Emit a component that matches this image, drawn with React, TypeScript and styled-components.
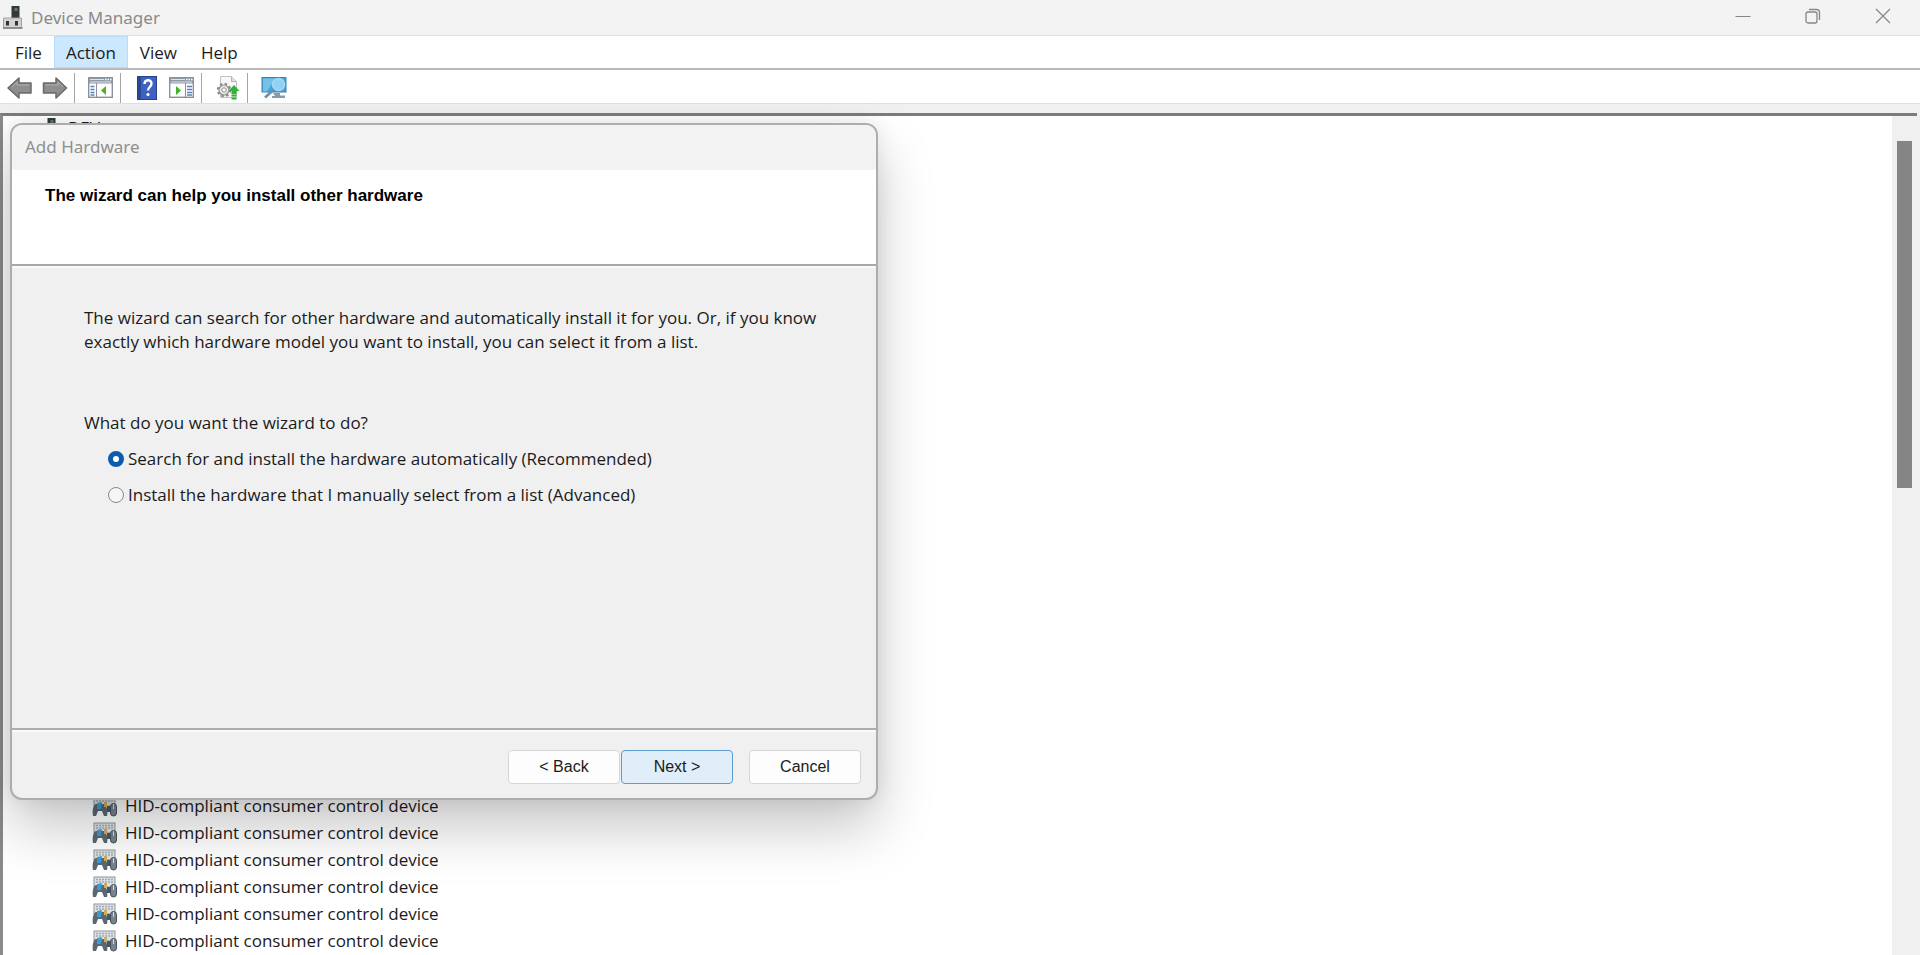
import React, { useState } from 'react';
import styled, { createGlobalStyle } from 'styled-components';

const ui = `'Open Sans', 'Segoe UI', sans-serif`;
const caption = `'Noto Sans', 'Segoe UI', sans-serif`;
const classic = `'Liberation Sans', Arial, sans-serif`;

const GlobalStyle = createGlobalStyle`
  *, *::before, *::after { box-sizing: border-box; }
  html, body { margin: 0; height: 100%; }
  body { background: #f3f3f3; color: #1b1b1b; font-family: ${ui}; overflow: hidden; }
  button, input { font: inherit; color: inherit; }
  svg { display: block; flex: none; }
`;

const Window = styled.div`
  display: flex;
  flex-direction: column;
  height: 100vh;
  overflow: hidden;
`;

const TitleBar = styled.header`
  display: flex;
  align-items: center;
  height: 35px;
  flex: none;
  padding: 0 2px;
  background: #f3f3f3;
`;

const WindowTitle = styled.h1`
  flex: 1;
  margin: 0 0 0 7px;
  font-family: ${caption};
  font-size: 17px;
  line-height: 24px;
  font-weight: 400;
  color: #8a8a8a;
`;

const CaptionButton = styled.button`
  display: grid;
  place-items: center;
  align-self: flex-start;
  width: 70px;
  height: 32px;
  padding: 0;
  border: 0;
  background: transparent;
  color: #868686;
`;

const MenuBar = styled.nav`
  display: flex;
  flex: none;
  height: 35px;
  padding-left: 3px;
  border-top: 1px solid #dedede;
  border-bottom: 2px solid #b9b9b9;
  background: #fff;
`;

const MenuButton = styled.button<{ $open?: boolean }>`
  height: 32px;
  padding: 2px 11px 0;
  border: 1px solid ${p => (p.$open ? '#b8dcfa' : 'transparent')};
  background: ${p => (p.$open ? '#cce8ff' : 'transparent')};
  font-size: 17px;
  line-height: 28px;
`;

const ToolBar = styled.div`
  display: flex;
  align-items: center;
  flex: none;
  height: 33px;
  padding: 2px 0 0 2px;
  background: #fff;
`;

const ToolButton = styled.button`
  display: grid;
  place-items: center;
  width: 35px;
  height: 30px;
  padding: 0;
  border: 0;
  background: transparent;
`;

const Separator = styled.span`
  width: 1px;
  height: 30px;
  margin: 0 8px 0 2px;
  background: #a5a5a5;
`;

const Frame = styled.div`
  display: flex;
  flex: 1;
  min-height: 0;
  padding: 9px 3px 0 0;
  border-top: 1px solid #e0e0e0;
  background: #f0f0f0;
`;

const Pane = styled.main`
  position: relative;
  display: flex;
  flex: 1;
  border-top: 3px solid #7c7c7c;
  border-left: 3px solid #8a8a8a;
  background: #fff;
`;

const Tree = styled.ul`
  flex: 1;
  margin: 0;
  padding: 1px 0 0 35px;
  list-style: none;
`;

const DeviceList = styled.ul`
  margin: 648px 0 0;
  padding: 0 0 0 54px;
  list-style: none;
`;

const TreeRow = styled.div<{ $root?: boolean }>`
  display: flex;
  align-items: ${p => (p.$root ? 'flex-start' : 'center')};
  gap: 8px;
  height: 27px;
  font-size: 17px;
  line-height: ${p => (p.$root ? '22px' : '27px')};
  white-space: nowrap;
`;

const ScrollTrack = styled.div`
  width: 25px;
  padding: 25px 5px 0;
  background: #f0f0f0;
`;

const ScrollThumb = styled.div`
  height: 347px;
  background: #858585;
`;

const Dialog = styled.section`
  position: absolute;
  top: 7px;
  left: 7px;
  display: flex;
  flex-direction: column;
  width: 868px;
  height: 677px;
  overflow: hidden;
  border: 2px solid #adadad;
  border-radius: 12px;
  background: #f0f0f0;
  box-shadow: 0 28px 56px rgba(0, 0, 0, 0.22), 0 0 20px rgba(0, 0, 0, 0.08);
`;

const DialogTitle = styled.h2`
  flex: none;
  height: 45px;
  margin: 0;
  padding: 0 13px;
  background: #f3f3f3;
  font-family: ${caption};
  font-size: 17px;
  line-height: 43px;
  font-weight: 400;
  color: #8f8f8f;
`;

const DialogHeader = styled.div`
  flex: none;
  height: 96px;
  padding: 15px 33px;
  border-bottom: 2px solid #a8a8a8;
  background: #fff;
`;

const Heading = styled.h3`
  margin: 0;
  font-family: ${classic};
  font-size: 17px;
  line-height: 22px;
  font-weight: 700;
  color: #000;
`;

const DialogBody = styled.form`
  flex: 1;
  padding: 38px 40px 0 72px;
  border-top: 2px solid #fafafa;
  font-size: 17px;
  line-height: 24px;
`;

const Intro = styled.p`
  margin: 0 0 57px;
`;

const Choices = styled.fieldset`
  margin: 0;
  padding: 0;
  border: 0;
`;

const Question = styled.legend`
  padding: 0;
`;

const Choice = styled.label`
  display: flex;
  align-items: center;
  gap: 4px;
  margin: 12px 0 0 24px;
`;

const Radio = styled.input`
  appearance: none;
  width: 16px;
  height: 16px;
  margin: 0;
  border: 1px solid #888;
  border-radius: 50%;
  background: #f6f6f6;
  &:checked {
    border: 5px solid #0b5cad;
    background: #fff;
  }
`;

const DialogFooter = styled.footer`
  display: flex;
  flex: none;
  justify-content: flex-end;
  height: 70px;
  padding: 20px 15px 0;
  border-top: 2px solid #adadad;
  box-shadow: inset 0 2px 0 #fafafa;
`;

const ActionButton = styled.button<{ $primary?: boolean; $apart?: boolean }>`
  width: 112px;
  height: 34px;
  margin-left: ${p => (p.$apart ? '16px' : '1px')};
  border: 1px solid ${p => (p.$primary ? '#5b9bd0' : '#d6d6d6')};
  border-radius: 4px;
  background: ${p => (p.$primary ? '#e0eef9' : '#fdfdfd')};
  font-family: ${classic};
  font-size: 16px;
`;

const ComputerIcon = () => (
  <svg width="22" height="25" viewBox="0 0 22 25">
    <rect x="9.500" y="1" width="8" height="13" fill="#343a3a" />
    <rect x="12.500" y="3" width="3" height="3" fill="#5d7a6c" />
    <path d="M1.500 13h18v10h-18z" fill="#d2d2d2" stroke="#a2a2a2" />
    <path d="M1 22h19.500v2H1z" fill="#8c8c8c" />
    <rect x="4" y="16" width="3" height="4.500" fill="#333" />
    <rect x="13" y="16" width="3" height="4.500" fill="#333" />
  </svg>
);

const ArrowIcon = ({ flip }: { flip?: boolean }) => (
  <svg width="26" height="24" viewBox="0 0 26 24">
    <path
      d={flip ? 'M24.500 12 14 2v5H1.500v10H14v5z' : 'M1 12 12 2v5h12v10H12v5z'}
      fill="#8e8e8e" stroke="#686868" strokeWidth="1.500" strokeLinejoin="round"
    />
    <path d={flip ? 'M3.500 9H16V6l5 5' : 'M22.500 9H10V6l-5 5'} fill="none" stroke="#b0b0b0" />
  </svg>
);

const ConsoleIcon = ({ flip }: { flip?: boolean }) => (
  <svg width="25" height="21" viewBox="0 0 25 21">
    <rect x=".7" y=".7" width="23.600" height="19.600" fill="#fff" stroke="#8b929c" strokeWidth="1.400" />
    <path d="M1 1h23v5.500H1z" fill="#8f99a6" />
    <path d="M2 2.500h14M2 5h21" stroke="#dce3ea" />
    <path d="M17 2.500h1.500M19.500 2.500H21M22 2.500h1.500" stroke="#fff" strokeWidth="1.500" />
    <path d={flip ? 'M16.500 6v14' : 'M8.500 6v14'} stroke="#8b929c" />
    <path d={flip ? 'M18 9.500h5M18 12.500h5M18 15.500h5M18 18h5' : 'M2.500 9.500h4M2.500 12.500h4M2.500 15.500h4M2.500 18h4'} stroke="#5b7fb0" strokeWidth="1.300" />
    <path d={flip ? 'M7 9v9l5-4.500z' : 'M18 9v9l-5-4.500z'} fill="#47b02c" />
  </svg>
);

const HelpIcon = () => (
  <svg width="20" height="24" viewBox="0 0 20 24">
    <rect x=".5" y=".5" width="19" height="23" fill="#3f62c0" stroke="#27408f" />
    <path d="M1 1h3v22H1z" fill="#2b4797" />
    <path d="M7.500 8c0-5 7-5 7-.5 0 3.500-3.500 3.500-3.500 7" fill="none" stroke="#fff" strokeWidth="2.400" />
    <circle cx="11" cy="18.500" r="1.600" fill="#fff" />
  </svg>
);

const UpdateIcon = () => (
  <svg width="24" height="25" viewBox="0 0 24 25">
    <path d="M4.500 1.500h11l5 5v16h-16z" fill="#f7f7f7" stroke="#c2c2c2" />
    <path d="M15.500 1.500v5h5" fill="#ddd" stroke="#b5b5b5" />
    <circle cx="8" cy="15" r="6" fill="none" stroke="#8d8d8d" strokeWidth="2.500" strokeDasharray="2.400 2.300" />
    <circle cx="8" cy="15" r="5" fill="#e9e9e9" stroke="#8d8d8d" strokeWidth="1.200" />
    <circle cx="8" cy="15" r="2.200" fill="#fff" stroke="#8d8d8d" />
    <path d="m18 10 5.500 6h-3v3h-5v-3h-3z" fill="#2fb436" />
    <path d="M15.500 20.500h5M15.500 23.500h5" stroke="#2fb436" strokeWidth="1.800" />
  </svg>
);

const ScanIcon = () => (
  <svg width="26" height="24" viewBox="0 0 26 24">
    <rect x="1" y="1.500" width="24" height="14.500" fill="#45a5dc" stroke="#3b82ad" />
    <path d="M2 2.500h12l-8 13H2z" fill="#74c1ea" />
    <path d="M12 17h7v2.500h5v2.500H11v-2h3z" fill="#8c9aa5" />
    <circle cx="17.500" cy="8.500" r="6" fill="#8ed3f3" stroke="#a9d9f0" strokeWidth="1.500" />
    <path d="m13 13.500-9 8" stroke="#6a91aa" strokeWidth="2.600" />
  </svg>
);

const HidIcon = () => (
  <svg width="25" height="22" viewBox="0 0 25 22">
    <rect x="2" y="1" width="21" height="10" fill="#dde1e4" stroke="#8f979e" />
    <path d="M4 3.500h17M4 6h17" stroke="#a3abb2" strokeWidth="1.300" strokeDasharray="2 1" />
    <path d="M1 21c-1-5 0-11 3-12h8c3 2 4 8 3 12h-3l-2-5H6l-2 5z" fill="#5b6771" />
    <path d="m5 8 5-1-1 7H5z" fill="#3e9dd0" />
    <path d="M12 7h3v5h-3z" fill="#d3ac57" />
    <path d="M15 11h4v6h-4z" fill="#4a5762" />
    <rect x="18.500" y="8.500" width="6" height="12.500" rx="3" fill="#78838d" stroke="#46525d" />
    <path d="M21.500 9v5" stroke="#d5dbe0" />
  </svg>
);

const devices = Array.from({ length: 6 }, () => 'HID-compliant consumer control device');

const options = [
  { id: 'auto', label: 'Search for and install the hardware automatically (Recommended)' },
  { id: 'manual', label: 'Install the hardware that I manually select from a list (Advanced)' },
];

export default function App() {
  const [choice, setChoice] = useState('auto');

  return (
    <Window>
      <GlobalStyle />
      <TitleBar>
        <ComputerIcon />
        <WindowTitle>Device Manager</WindowTitle>
        <CaptionButton aria-label="Minimize">
          <svg width="16" height="16" viewBox="0 0 16 16"><path d="M.5 8.500h15" stroke="currentColor" /></svg>
        </CaptionButton>
        <CaptionButton aria-label="Restore">
          <svg width="16" height="16" viewBox="0 0 16 16" fill="none" stroke="currentColor" strokeWidth="1.300">
            <rect x="1" y="4" width="11" height="11" rx="2" />
            <path d="M4 1.500h7.500a3 3 0 0 1 3 3V12" />
          </svg>
        </CaptionButton>
        <CaptionButton aria-label="Close">
          <svg width="16" height="16" viewBox="0 0 16 16"><path d="m1 1 14 14M15 1 1 15" stroke="currentColor" strokeWidth="1.200" /></svg>
        </CaptionButton>
      </TitleBar>
      <MenuBar>
        <MenuButton>File</MenuButton>
        <MenuButton $open>Action</MenuButton>
        <MenuButton>View</MenuButton>
        <MenuButton>Help</MenuButton>
      </MenuBar>
      <ToolBar>
        <ToolButton aria-label="Back"><ArrowIcon /></ToolButton>
        <ToolButton aria-label="Forward"><ArrowIcon flip /></ToolButton>
        <Separator />
        <ToolButton aria-label="Show console tree"><ConsoleIcon /></ToolButton>
        <Separator />
        <ToolButton aria-label="Help"><HelpIcon /></ToolButton>
        <ToolButton aria-label="Show action pane"><ConsoleIcon flip /></ToolButton>
        <Separator />
        <ToolButton aria-label="Update driver"><UpdateIcon /></ToolButton>
        <Separator />
        <ToolButton aria-label="Scan for hardware changes"><ScanIcon /></ToolButton>
      </ToolBar>
      <Frame>
        <Pane>
          <Tree>
            <li>
              <TreeRow $root><ComputerIcon />DEV</TreeRow>
              <DeviceList>
                {devices.map((name, i) => (
                  <li key={i}><TreeRow><HidIcon />{name}</TreeRow></li>
                ))}
              </DeviceList>
            </li>
          </Tree>
          <ScrollTrack><ScrollThumb /></ScrollTrack>
          <Dialog role="dialog" aria-labelledby="dialog-title">
            <DialogTitle id="dialog-title">Add Hardware</DialogTitle>
            <DialogHeader>
              <Heading>The wizard can help you install other hardware</Heading>
            </DialogHeader>
            <DialogBody>
              <Intro>
                The wizard can search for other hardware and automatically install it for you. Or, if you know
                exactly which hardware model you want to install, you can select it from a list.
              </Intro>
              <Choices>
                <Question>What do you want the wizard to do?</Question>
                {options.map(o => (
                  <Choice key={o.id} htmlFor={o.id}>
                    <Radio
                      type="radio" name="mode" id={o.id}
                      checked={choice === o.id} onChange={() => setChoice(o.id)}
                    />
                    {o.label}
                  </Choice>
                ))}
              </Choices>
            </DialogBody>
            <DialogFooter>
              <ActionButton>&lt; Back</ActionButton>
              <ActionButton $primary>Next &gt;</ActionButton>
              <ActionButton $apart>Cancel</ActionButton>
            </DialogFooter>
          </Dialog>
        </Pane>
      </Frame>
    </Window>
  );
}
